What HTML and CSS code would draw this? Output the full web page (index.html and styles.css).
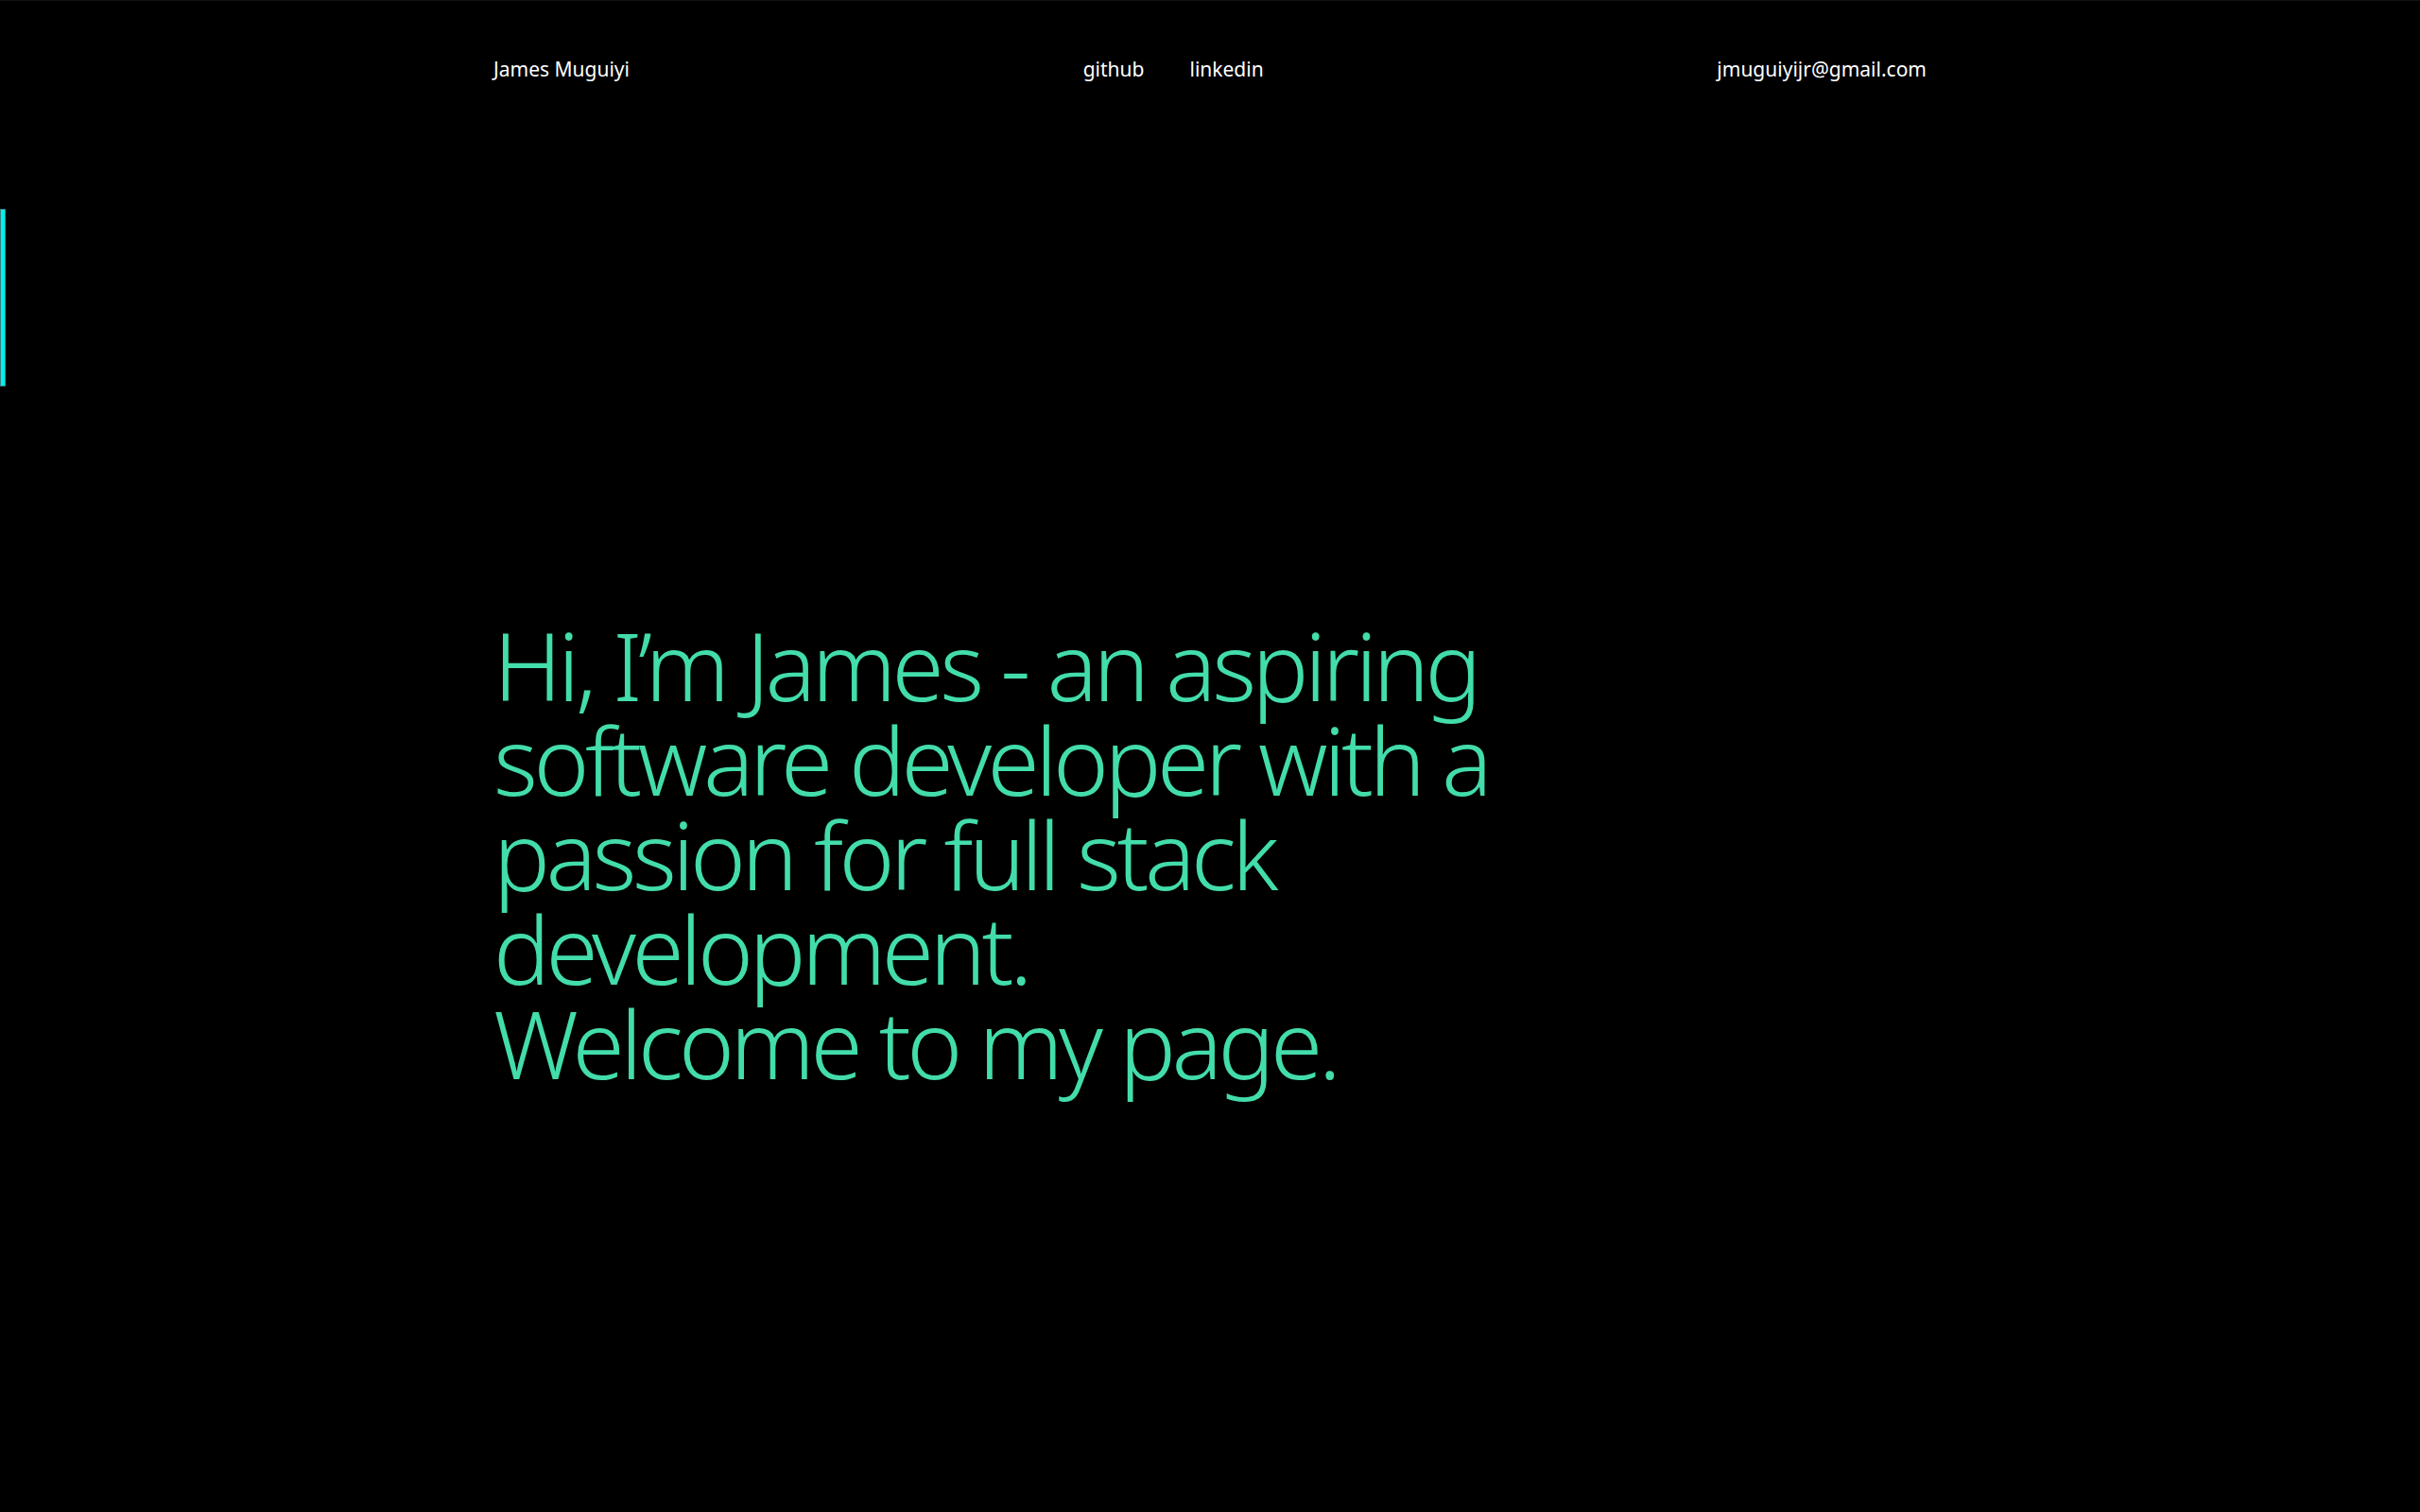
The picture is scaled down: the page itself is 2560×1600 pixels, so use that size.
FILE: index.html
```html
<!DOCTYPE html>
<html lang="en">
<head>
<meta charset="utf-8">
<title>James Muguiyi</title>
<link rel="stylesheet" href="styles.css">
</head>
<body>
<div class="progress"></div>
<div class="page">
  <header class="topbar">
    <div class="brand">James Muguiyi</div>
    <nav class="links">
      <a href="#">github</a>
      <a href="#">linkedin</a>
    </nav>
    <div class="email">jmuguiyijr@gmail.com</div>
  </header>
  <main class="hero">
    <h1 class="headline">Hi, I’m James - an aspiring software developer with a passion for full stack development.<br>Welcome to my page.</h1>
  </main>
</div>
</body>
</html>
```

FILE: styles.css
```css
html, body {
  margin: 0;
  padding: 0;
  background: #000;
  height: 100%;
}
body {
  border-top: 1px solid #111;
  box-sizing: border-box;
  font-family: "Noto Sans", "Open Sans", sans-serif;
  color: #fff;
}
.progress {
  position: fixed;
  left: 0;
  top: 221px;
  width: 4px;
  height: 186px;
  background: #00f0f0;
  border: 1px solid #3a7f7f;
}
.page {
  width: 1516px;
  margin: 0 auto;
}
.topbar {
  display: flex;
  justify-content: space-between;
  align-items: center;
  padding-top: 59px;
  font-size: 21px;
  line-height: 27px;
}
.links {
  display: flex;
  gap: 48px;
}
.links a {
  color: #fff;
  text-decoration: none;
}
.hero {
  padding-top: 566px;
}
.headline {
  margin: 0;
  max-width: 1100px;
  font-family: "Noto Sans", "Open Sans", sans-serif;
  font-weight: 300;
  font-size: 100px;
  line-height: 100px;
  color: #43dcab;
  letter-spacing: -4.5px;
}
```
